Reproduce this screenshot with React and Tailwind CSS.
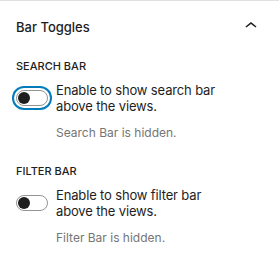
// Bar Toggles settings panel (block editor sidebar style)

function ChevronUp() {
  return (
    <svg width="24" height="24" viewBox="0 0 24 24" className="fill-[#1e1e1e]">
      <path d="M6.5 12.4L12 8l5.5 4.4-.9 1.2L12 10l-4.6 3.6-1-1.2z" />
    </svg>
  );
}

function Toggle({ focused = false }) {
  return (
    <span
      className={`relative shrink-0 w-8 h-4 rounded-full border border-[#949494] bg-white ${
        focused ? "shadow-[0_0_0_2px_#fff,0_0_0_4px_#007cba]" : ""
      }`}
    >
      <span className="absolute left-[1px] top-[1px] w-3 h-3 rounded-full bg-[#1e1e1e]" />
    </span>
  );
}

function ToggleField({ title, label, help, focused, className = "" }) {
  return (
    <div className={className}>
      <div className="text-[11px] leading-4 font-medium uppercase text-[#1e1e1e]">{title}</div>
      <div className="flex items-center gap-2 mt-2">
        <Toggle focused={focused} />
        <span className="text-[13px] leading-4 tracking-[-0.15px] text-[#1e1e1e] w-[170px]">{label}</span>
      </div>
      <p className="text-[12px] leading-4 text-[#757575] pl-10 mt-[11px]">{help}</p>
    </div>
  );
}

export default function App() {
  return (
    <div
      className="w-[279px] h-[275px] bg-white border-t border-[#e0e0e0] overflow-hidden"
      style={{ fontFamily: "Inter, 'Noto Sans', sans-serif" }}
    >
      <div className="flex items-center justify-between h-[50px] pl-4 pr-4">
        <span className="pt-1 text-[13px] font-medium text-[#1e1e1e]">Bar Toggles</span>
        <ChevronUp />
      </div>

      <div className="px-4">
        <ToggleField
          className="mt-[7px]"
          title="Search Bar"
          label="Enable to show search bar above the views."
          help="Search Bar is hidden."
          focused
        />
        <ToggleField
          className="mt-[22px]"
          title="Filter Bar"
          label="Enable to show filter bar above the views."
          help="Filter Bar is hidden."
        />
      </div>
    </div>
  );
}
